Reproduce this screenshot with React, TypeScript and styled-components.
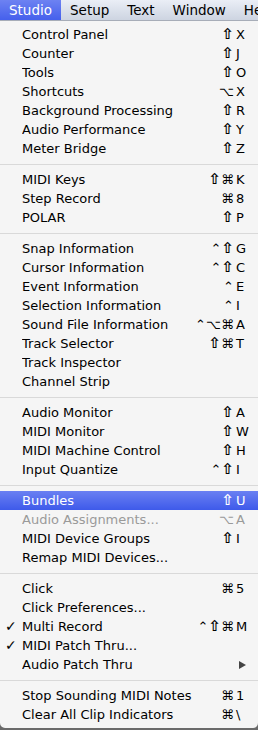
import React from "react";
import styled, { createGlobalStyle } from "styled-components";

type Item = {
  label: string;
  mods?: string;
  keyChar?: string;
  checked?: boolean;
  disabled?: boolean;
  active?: boolean;
  submenu?: boolean;
};

const groups: Item[][] = [
  [
    { label: "Control Panel", mods: "⇧", keyChar: "X" },
    { label: "Counter", mods: "⇧", keyChar: "J" },
    { label: "Tools", mods: "⇧", keyChar: "O" },
    { label: "Shortcuts", mods: "⌥", keyChar: "X" },
    { label: "Background Processing", mods: "⇧", keyChar: "R" },
    { label: "Audio Performance", mods: "⇧", keyChar: "Y" },
    { label: "Meter Bridge", mods: "⇧", keyChar: "Z" },
  ],
  [
    { label: "MIDI Keys", mods: "⇧⌘", keyChar: "K" },
    { label: "Step Record", mods: "⌘", keyChar: "8" },
    { label: "POLAR", mods: "⇧", keyChar: "P" },
  ],
  [
    { label: "Snap Information", mods: "⌃⇧", keyChar: "G" },
    { label: "Cursor Information", mods: "⌃⇧", keyChar: "C" },
    { label: "Event Information", mods: "⌃", keyChar: "E" },
    { label: "Selection Information", mods: "⌃", keyChar: "I" },
    { label: "Sound File Information", mods: "⌃⌥⌘", keyChar: "A" },
    { label: "Track Selector", mods: "⇧⌘", keyChar: "T" },
    { label: "Track Inspector" },
    { label: "Channel Strip" },
  ],
  [
    { label: "Audio Monitor", mods: "⇧", keyChar: "A" },
    { label: "MIDI Monitor", mods: "⇧", keyChar: "W" },
    { label: "MIDI Machine Control", mods: "⇧", keyChar: "H" },
    { label: "Input Quantize", mods: "⌃⇧", keyChar: "I" },
  ],
  [
    { label: "Bundles", mods: "⇧", keyChar: "U", active: true },
    { label: "Audio Assignments...", mods: "⌥", keyChar: "A", disabled: true },
    { label: "MIDI Device Groups", mods: "⇧", keyChar: "I" },
    { label: "Remap MIDI Devices..." },
  ],
  [
    { label: "Click", mods: "⌘", keyChar: "5" },
    { label: "Click Preferences..." },
    { label: "Multi Record", mods: "⌃⇧⌘", keyChar: "M", checked: true },
    { label: "MIDI Patch Thru...", checked: true },
    { label: "Audio Patch Thru", submenu: true },
  ],
  [
    { label: "Stop Sounding MIDI Notes", mods: "⌘", keyChar: "1" },
    { label: "Clear All Clip Indicators", mods: "⌘", keyChar: "\\" },
  ],
];

const menus = ["Studio", "Setup", "Text", "Window", "Help"];

// shift arrow is thin in DejaVu, so it gets its own bolder span
const renderMods = (mods?: string) =>
  mods
    ? Array.from(mods).map((c, i) =>
        c === "⇧" ? <Shift key={i}>{c}</Shift> : <span key={i}>{c}</span>
      )
    : null;

export default function App() {
  return (
    <>
      <GlobalStyle />
      <Screen>
        <MenuBar>
          {menus.map((m, i) => (
            <BarItem key={m} $active={i === 0}>
              {m}
            </BarItem>
          ))}
        </MenuBar>
        <Menu>
          {groups.map((group, gi) => (
            <React.Fragment key={gi}>
              {gi > 0 && <Separator />}
              {group.map((item) => (
                <Row key={item.label} $active={item.active} $disabled={item.disabled}>
                  <Check>{item.checked ? "✓" : ""}</Check>
                  <Label>{item.label}</Label>
                  <Mods>{renderMods(item.mods)}</Mods>
                  <KeyChar>{item.submenu ? <Arrow /> : item.keyChar}</KeyChar>
                </Row>
              ))}
            </React.Fragment>
          ))}
        </Menu>
      </Screen>
    </>
  );
}

const GlobalStyle = createGlobalStyle`
  html, body {
    margin: 0;
    padding: 0;
    background: #6a6a6a;
  }
  body {
    font-family: "DejaVu Sans", "Liberation Sans", sans-serif;
  }
`;

const Screen = styled.div`
  width: 258px;
  height: 730px;
  overflow: hidden;
  display: flex;
  flex-direction: column;
`;

const MenuBar = styled.div`
  height: 20px;
  display: flex;
  align-items: stretch;
  background: linear-gradient(#eaeef6, #cdd4e1);
  border-bottom: 1px solid #a7adb8;
  white-space: nowrap;
  overflow: hidden;
`;

const BarItem = styled.div<{ $active?: boolean }>`
  display: flex;
  align-items: center;
  flex-shrink: 0;
  padding: 0 9px;
  font-size: 13.5px;
  color: ${(p) => (p.$active ? "#fff" : "#000")};
  background: ${(p) => (p.$active ? "linear-gradient(#6d82f2, #4560ec)" : "transparent")};
`;

const Menu = styled.div`
  background: #f5f5f5;
  padding: 4px 0;
  border-radius: 0 0 5px 5px;
`;

const Separator = styled.div`
  height: 12px;
  display: flex;
  align-items: center;
  &::before {
    content: "";
    flex: 1;
    height: 1px;
    background: #d9d9d9;
  }
`;

const Row = styled.div<{ $active?: boolean; $disabled?: boolean }>`
  height: 19px;
  display: grid;
  grid-template-columns: 22px 1fr auto 13px;
  padding-right: 9px;
  align-items: center;
  font-size: 13px;
  line-height: 19px;
  white-space: nowrap;
  color: ${(p) => (p.$active ? "#fff" : p.$disabled ? "#9a9a9a" : "#000")};
  background: ${(p) => (p.$active ? "linear-gradient(#6a80f2, #3e5aea)" : "transparent")};
`;

const Check = styled.span`
  padding-left: 5px;
  font-size: 14px;
  font-weight: bold;
`;

const Label = styled.span`
  overflow: hidden;
`;

const Mods = styled.span`
  text-align: right;
  padding-right: 2px;
`;

const Shift = styled.span`
  font-size: 15px;
  font-weight: bold;
`;

const KeyChar = styled.span`
  display: flex;
  align-items: center;
`;

const Arrow = styled.span`
  width: 0;
  height: 0;
  margin-left: 3px;
  border-top: 4.5px solid transparent;
  border-bottom: 4.5px solid transparent;
  border-left: 7px solid #444;
`;
